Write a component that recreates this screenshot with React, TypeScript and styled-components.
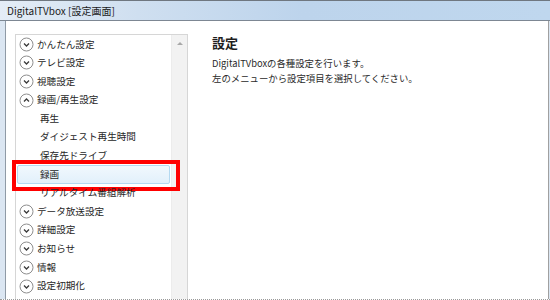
import styled, { createGlobalStyle } from "styled-components";

type MenuItem = {
    label: string;
    level: 'top' | 'sub';
    open?: boolean;
    selected?: boolean;
};

const MENU: MenuItem[] = [
    { label: 'かんたん設定', level: 'top' },
    { label: 'テレビ設定', level: 'top' },
    { label: '視聴設定', level: 'top' },
    { label: '録画/再生設定', level: 'top', open: true },
    { label: '再生', level: 'sub' },
    { label: 'ダイジェスト再生時間', level: 'sub' },
    { label: '保存先ドライブ', level: 'sub' },
    { label: '録画', level: 'sub', selected: true },
    { label: 'リアルタイム番組解析', level: 'sub' },
    { label: 'データ放送設定', level: 'top' },
    { label: '詳細設定', level: 'top' },
    { label: 'お知らせ', level: 'top' },
    { label: '情報', level: 'top' },
    { label: '設定初期化', level: 'top' },
];

const Chevron = ({ open }: { open?: boolean }) => (
    <svg width="15" height="15" viewBox="0 0 15 15">
        <circle cx="7.5" cy="7.5" r="6.5" fill="#fff" stroke="#8e8e8e" strokeWidth="1" />
        <path
            d={open ? "M5 8.5 L7.5 6 L10 8.5" : "M5 6.5 L7.5 9 L10 6.5"}
            fill="none"
            stroke="#3a3a3a"
            strokeWidth="1.3"
        />
    </svg>
);

const App = () => {
    return (
        <>
            <GlobalStyle />
            <Window>
                <TitleBar>DigitalTVbox [設定画面]</TitleBar>
                <Frame>
                    <Client>
                        <ListBox>
                            <MenuList>
                                {MENU.map((item, i) => (
                                    <MenuRow key={i} level={item.level}>
                                        {item.selected && <Highlight />}
                                        {item.level === 'top' && <Chevron open={item.open} />}
                                        <MenuLabel>{item.label}</MenuLabel>
                                        {item.selected && <Marker />}
                                    </MenuRow>
                                ))}
                            </MenuList>
                            <ScrollBar>
                                <ScrollArrow />
                            </ScrollBar>
                        </ListBox>
                        <Panel>
                            <Heading>設定</Heading>
                            <BodyText>DigitalTVboxの各種設定を行います。</BodyText>
                            <BodyText>左のメニューから設定項目を選択してください。</BodyText>
                        </Panel>
                    </Client>
                </Frame>
            </Window>
        </>
    );
}

export default App;


const GlobalStyle = createGlobalStyle`
    html, body {
        margin: 0;
        padding: 0;
        background: #ffffff;
    }
    body {
        width: 550px;
        height: 300px;
        overflow: hidden;
        font-family: "Noto Sans CJK JP", "Liberation Sans", sans-serif;
    }
`;

const Window = styled.div`
    display: flex;
    flex-direction: column;
    width: 550px;
    height: 300px;
    box-sizing: border-box;
    border-bottom: 1px dotted #9a9a9a;
    overflow: hidden;
`;

const TitleBar = styled.div`
    height: 21px;
    flex: none;
    box-sizing: border-box;
    border-top: 1px solid #6f7780;
    border-bottom: 1px solid #7d8793;
    padding: 0 0 0 7px;
    background: linear-gradient(90deg, #e4edf6 0%, #cfdff0 25%, #bdd4ec 55%, #bfd7ee 100%);
    font-size: 10px;
    line-height: 19px;
    color: #1b1b1b;
`;

const Frame = styled.div`
    flex: 1;
    display: flex;
    min-height: 0;
    padding: 0 1px 0 5px;
    background: #dbe6f2;
`;

const Client = styled.div`
    flex: 1;
    display: flex;
    align-items: flex-start;
    background: #ffffff;
    border-left: 1px solid #8f9aa6;
    border-right: 1px solid #a0a0a0;
    padding: 13px 0 0 9px;
    min-height: 0;
`;

const ListBox = styled.div`
    display: flex;
    width: 173px;
    height: 290px;
    flex: none;
    box-sizing: border-box;
    border: 1px solid #d6d6d6;
    border-bottom: none;
`;

const MenuList = styled.div`
    flex: 1;
    display: flex;
    flex-direction: column;
    position: relative;
    z-index: 1;
`;

const MenuRow = styled.div<{
    level: 'top' | 'sub';
}>`
    position: relative;
    display: flex;
    align-items: center;
    gap: 3px;
    height: 18.6px;
    padding: 0 0 0 ${props => props.level === 'top' ? '3px' : '24px'};
    font-size: 9.6px;
    color: #262626;
    white-space: nowrap;
`;

const MenuLabel = styled.span`
    position: relative;
    line-height: 1;
`;

const Highlight = styled.div`
    position: absolute;
    inset: 0 1px 0 1px;
    border: 1px solid #b4d9f1;
    border-radius: 2px;
    background: linear-gradient(180deg, #f1f8fd 0%, #e2f0fb 100%);
`;

const Marker = styled.div`
    position: absolute;
    top: -5px;
    bottom: -7px;
    left: -4px;
    right: -9px;
    border: 4px solid #ff0000;
`;

const ScrollBar = styled.div`
    width: 15px;
    flex: none;
    background: #f2f2f2;
    border-left: 1px solid #ececec;
    display: flex;
    justify-content: center;
`;

const ScrollArrow = styled.div`
    margin-top: 7px;
    width: 0;
    height: 0;
    border-left: 3px solid transparent;
    border-right: 3px solid transparent;
    border-bottom: 3px solid #a8a8a8;
`;

const Panel = styled.div`
    display: flex;
    flex-direction: column;
    padding: 1px 0 0 24px;
    color: #2a2a2a;
`;

const Heading = styled.div`
    font-size: 13px;
    font-weight: 700;
    line-height: 16px;
    color: #1e1e1e;
    margin: 0 0 5px 0;
`;

const BodyText = styled.div`
    font-size: 9.4px;
    line-height: 15px;
`;
